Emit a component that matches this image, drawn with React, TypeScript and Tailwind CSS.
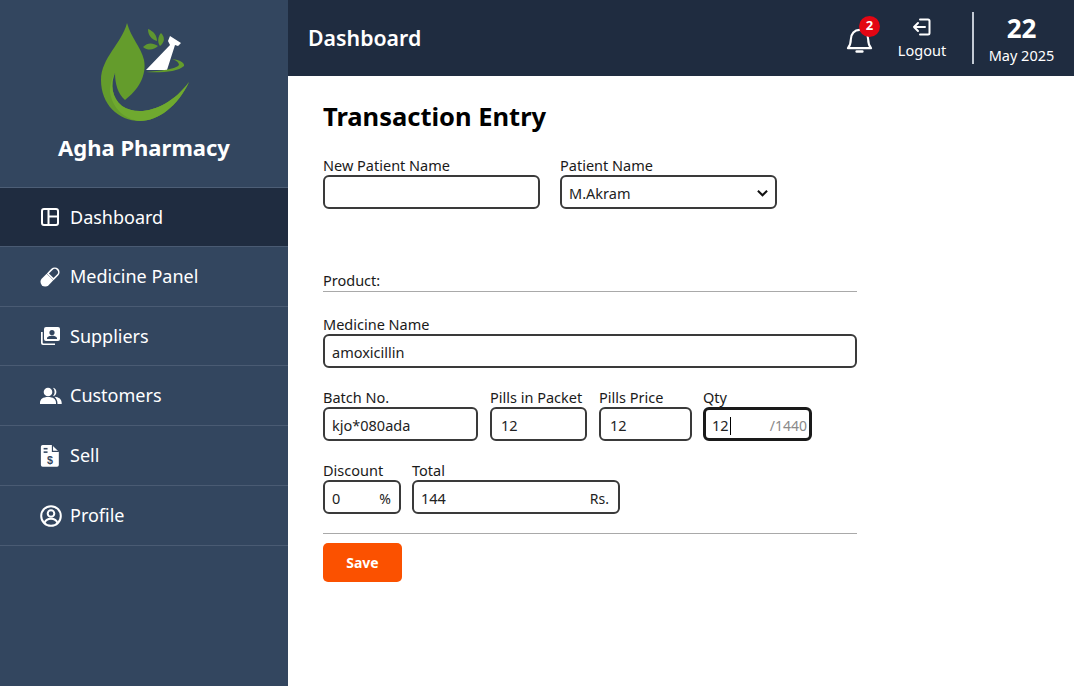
import React from "react";

const font = "font-['Noto_Sans','Open_Sans',sans-serif]";

function Logo() {
  return (
    <svg width="90" height="100" viewBox="100 22 90 100" className="block ml-[2px]">
      <path d="M127 23 C131 38 141 47 144 60 C147 76 138 90 125 100 C118 94 115 84 115 73 C110 84 112 98 122 106 C140 118 170 108 189 82 C178 106 158 121 140 121 C118 121 101 104 101 80 C101 58 122 43 127 23 Z" fill="#649c2c" />
      <path d="M115 73 C110 84 112 98 122 106 C140 118 170 108 189 82 C178 106 158 121 140 121 C125 120 112 108 110 92 C110 84 112 78 115 73 Z" fill="#6fa92f" />
      <path d="M148 29 C153 31 157 35 157 41 C151 39 148 35 148 29 Z" fill="#5f9630" />
      <path d="M161 33 C165 37 165 42 160 46 C157 42 158 36 161 33 Z" fill="#5f9630" />
      <path d="M143 47 C148 42 153 43 158 46 C154 50 148 51 143 47 Z" fill="#5f9630" />
      <path d="M146 70 L170 45 L168 41 L170 36 L181 43 L178 46 L175 45 L167 70 Z" fill="#ffffff" />
      <path d="M172 59 C180 60 185 63 184 66 C178 72 160 73 146 72 C160 71 176 69 179 65 C179 62 175 60 172 59 Z" fill="#649c2c" />
    </svg>
  );
}

const iconCls = "w-[20px] h-[20px] shrink-0";

function DashIcon() {
  return (
    <svg viewBox="0 0 20 20" className={iconCls} fill="none" stroke="#fff" strokeWidth="2">
      <rect x="2" y="2" width="16" height="16" rx="2" />
      <path d="M8.500 2v16M8.500 9.500H18" />
    </svg>
  );
}
function PillIcon() {
  return (
    <svg viewBox="0 0 20 20" className={iconCls}>
      <g transform="rotate(-45 10 10)">
        <path d="M10 5.250H3.250a4.750 4.750 0 0 0 0 9.500H10Z" fill="#fff" />
        <path d="M11 6h5.750a4 4 0 0 1 0 8H11Z" fill="none" stroke="#fff" strokeWidth="1.600" />
      </g>
    </svg>
  );
}
function SupplierIcon() {
  return (
    <svg viewBox="0 0 20 20" className={iconCls}>
      <path d="M1 6h1.700v10.500a1 1 0 0 0 1 1H15V19H3a2 2 0 0 1-2-2Z" fill="#fff" />
      <path fillRule="evenodd" d="M6 1h12a2 2 0 0 1 2 2v10a2 2 0 0 1-2 2H6a2 2 0 0 1-2-2V3a2 2 0 0 1 2-2Zm6 3a2.600 2.600 0 1 0 0 5.200a2.600 2.600 0 0 0 0-5.200ZM7 13h10v-.800c0-1.800-3.300-2.500-5-2.500s-5 .700-5 2.500Z" fill="#fff" />
    </svg>
  );
}
function CustomerIcon() {
  return (
    <svg viewBox="0 0 22 20" className="w-[22px] h-[20px] shrink-0" fill="#fff">
      <circle cx="8" cy="6" r="4.300" />
      <path d="M0 17c0-4 3-6 8-6s8 2 8 6v1H0Z" />
      <path d="M13 1.800a4.300 4.300 0 0 1 0 8.400 6.200 6.200 0 0 0 0-8.400ZM14.500 10.800c4.500.4 7.200 2.500 7.200 6.200v1h-4.200c0-3-1-5.200-3-7.200Z" />
    </svg>
  );
}
function SellIcon() {
  return (
    <svg viewBox="0 0 20 24.500" className="w-[20px] h-[24px] shrink-0">
      <path d="M2.500 1h9.500l7 7v13.500a1.800 1.800 0 0 1-1.800 1.800H2.500A1.800 1.800 0 0 1 .7 21.500V2.800A1.800 1.800 0 0 1 2.500 1Z" fill="#fff" />
      <path d="M12.500 1v6.500H19" fill="none" stroke="#33465f" strokeWidth="1.200" />
      <rect x="3.500" y="4" width="4" height="1.600" fill="#33465f" />
      <rect x="3.500" y="7.500" width="4" height="1.600" fill="#33465f" />
      <text x="10" y="20" textAnchor="middle" fontSize="11" fontWeight="700" fill="#33465f" fontFamily="Liberation Sans, sans-serif">$</text>
    </svg>
  );
}
function ProfileIcon() {
  return (
    <svg viewBox="0 0 22 22" className="w-[22px] h-[22px] shrink-0" fill="none" stroke="#fff" strokeWidth="2">
      <circle cx="11" cy="11" r="9.800" />
      <circle cx="11" cy="8.500" r="3.300" />
      <path d="M4.500 18c1-3 3.500-4.200 6.500-4.200s5.500 1.200 6.500 4.200" />
    </svg>
  );
}
function BellIcon() {
  return (
    <svg viewBox="0 0 28 28" className="w-[27px] h-[27px]" fill="none" stroke="#fff" strokeWidth="2.200" strokeLinejoin="round" strokeLinecap="round">
      <path d="M2 23c2-2.500 3-4 3-9 0-6 4-10 9-10s9 4 9 10c0 5 1 6.500 3 9Z" />
      <path d="M11 26.500h6" strokeWidth="2.500" />
    </svg>
  );
}
function LogoutIcon() {
  return (
    <svg viewBox="0 0 20 20" className="w-[20px] h-[20px]" fill="none" stroke="#fff" strokeWidth="2" strokeLinejoin="round" strokeLinecap="round">
      <path d="M8 2.500h8a1.500 1.500 0 0 1 1.500 1.500v12a1.500 1.500 0 0 1-1.500 1.500H8" />
      <path d="M13 10H2M6 6l-4 4 4 4" />
    </svg>
  );
}

const nav: { label: string; icon: React.ReactNode; h: string; active?: boolean; gap: string }[] = [
  { label: "Dashboard", icon: <DashIcon />, h: "h-[59px]", active: true, gap: "gap-[10px]" },
  { label: "Medicine Panel", icon: <PillIcon />, h: "h-[60px]", gap: "gap-[10px]" },
  { label: "Suppliers", icon: <SupplierIcon />, h: "h-[59px]", gap: "gap-[10px]" },
  { label: "Customers", icon: <CustomerIcon />, h: "h-[60px]", gap: "gap-[8px]" },
  { label: "Sell", icon: <SellIcon />, h: "h-[60px]", gap: "gap-[10px]" },
  { label: "Profile", icon: <ProfileIcon />, h: "h-[60px]", gap: "gap-[8px]" },
];

function Field({ label, className, children, focus }: { label: string; className: string; children: React.ReactNode; focus?: boolean }) {
  return (
    <div className={`flex flex-col ${className}`}>
      <span className="text-[14.500px] leading-[19px] text-[#1a1a1a] whitespace-nowrap">{label}</span>
      <div className={`h-[34px] flex items-center justify-between rounded-[6px] bg-white text-[14.500px] text-[#222] pt-[3px] ${focus ? "border-[3px] border-[#1a1a1a] pl-[6px] pr-[2px]" : "border-2 border-[#3a3a3a] pl-[7px] pr-[9px]"}`}>
        {children}
      </div>
    </div>
  );
}

export default function App() {
  return (
    <div className={`flex w-[1074px] h-[686px] overflow-hidden bg-white ${font}`}>
      <aside className="w-[288px] shrink-0 bg-[#33465f] text-white flex flex-col">
        <div className="h-[188px] shrink-0 border-b border-[#4d5e76] flex flex-col items-center pt-[22px]">
          <Logo />
          <div className="mt-[10px] text-[22px] leading-[30px] font-bold text-white">Agha Pharmacy</div>
        </div>
        {nav.map((n) => (
          <div key={n.label} className={`${n.h} shrink-0 border-b border-[#4a5b73] pl-[40px] flex items-center ${n.gap} text-[18px] ${n.active ? "bg-[#1f2c40]" : ""}`}>
            {n.icon}
            <span>{n.label}</span>
          </div>
        ))}
      </aside>
      <div className="flex-1 flex flex-col min-w-0">
        <header className="h-[76px] shrink-0 bg-[#1f2c40] text-white flex items-center pl-[20px]">
          <div className="text-[21.300px] font-semibold flex-1 -mt-[1px]">Dashboard</div>
          <div className="relative mr-[24px] mt-[2px]">
            <BellIcon />
            <span className="absolute -top-[10px] left-[13px] w-[21px] h-[21px] rounded-full bg-[#e30613] text-[13px] font-bold flex items-center justify-center">2</span>
          </div>
          <div className="flex flex-col items-center w-[50px] mr-[25px] pt-[1px]">
            <LogoutIcon />
            <span className="text-[14.500px] leading-[20px] mt-[3px]">Logout</span>
          </div>
          <div className="w-[2px] h-[52px] bg-[#c3cad4]" />
          <div className="w-[100px] pr-[5px] flex flex-col items-center pt-[2px]">
            <span className="text-[26px] leading-[30px] font-bold">22</span>
            <span className="text-[14.500px] leading-[20px] mt-[2px]">May 2025</span>
          </div>
        </header>
        <main className="flex-1 pl-[35px] pt-[23px]">
          <div className="w-[534px] flex flex-col">
            <h1 className="text-[25.500px] leading-[34px] font-bold text-black">Transaction Entry</h1>
            <div className="flex gap-[20px] mt-[23px]">
              <Field label="New Patient Name" className="w-[217px]"><span /></Field>
              <Field label="Patient Name" className="w-[217px]">
                <span>M.Akram</span>
                <svg viewBox="0 0 12 8" className="w-[11px] h-[8px] -mr-[2px] -mt-[2px]" fill="none" stroke="#111" strokeWidth="2.200"><path d="M1 1.500l5 5 5-5" /></svg>
              </Field>
            </div>
            <div className="mt-[62px] text-[14.500px] leading-[19px] text-[#1a1a1a] pb-[1px] border-b border-[#a9a9a9]">Product:</div>
            <Field label="Medicine Name" className="w-full mt-[23px]"><span>amoxicillin</span></Field>
            <div className="flex mt-[20px]">
              <Field label="Batch No." className="w-[155px]"><span>kjo*080ada</span></Field>
              <Field label="Pills in Packet" className="w-[97px] ml-[12px]"><span className="pl-[2px]">12</span></Field>
              <Field label="Pills Price" className="w-[93px] ml-[12px]"><span className="pl-[2px]">12</span></Field>
              <Field label="Qty" className="w-[109px] ml-[11px]" focus>
                <span className="flex items-center">12<span className="w-px h-[18px] bg-black ml-px" /></span>
                <span className="text-[14px] text-[#8a8a8a]">/1440</span>
              </Field>
            </div>
            <div className="flex mt-[20px]">
              <Field label="Discount" className="w-[78px]"><span>0</span><span className="text-[14px] -mr-[1px]">%</span></Field>
              <Field label="Total" className="w-[208px] ml-[11px]"><span>144</span><span className="text-[14px]">Rs.</span></Field>
            </div>
            <div className="mt-[19px] border-b border-[#a9a9a9]" />
            <button className="mt-[9px] w-[79px] h-[39px] rounded-[5px] bg-[#fb5100] text-white text-[14px] font-bold">Save</button>
          </div>
        </main>
      </div>
    </div>
  );
}
